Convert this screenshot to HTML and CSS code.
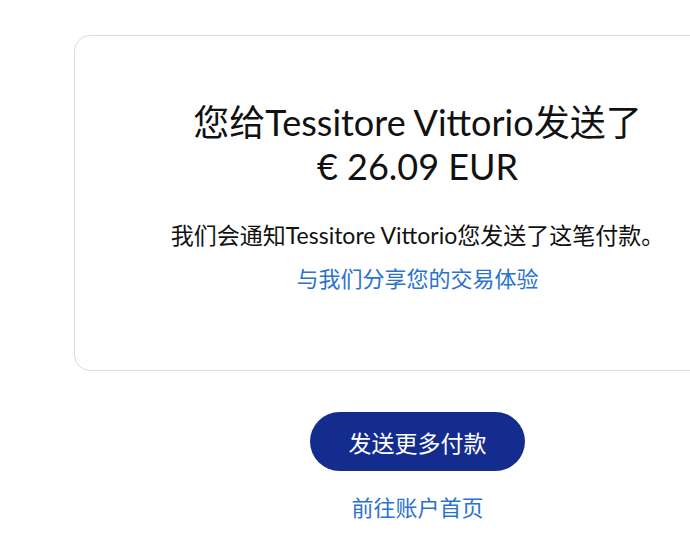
FILE: index.html
```html
<html>
    <head>
        <meta charset="utf-8">
        <link rel="stylesheet" href="styles.css">
    </head>
    <body>
        <div id="page">
            <div class="card">
                <h1 class="title">您给Tessitore Vittorio发送了<br>€ 26.09 EUR</h1>
                <p class="note">我们会通知Tessitore Vittorio您发送了这笔付款。</p>
                <a class="link share" href="#">与我们分享您的交易体验</a>
            </div>
            <div class="actions">
                <button class="more">发送更多付款</button>
                <a class="link home" href="#">前往账户首页</a>
            </div>
        </div>
    </body>
</html>
```

FILE: styles.css
```css
body, html {
    margin: 0;
    background: #fff;
    overflow: hidden;
}
#page {
    width: 687px;
    margin-left: 74px;
    padding-top: 35px;
    font-family: Lato, "Noto Sans CJK SC", sans-serif;
    color: #111;
}
.card {
    border: 1px solid #dcdcdc;
    border-radius: 16px;
    padding: 64px 20px 73px;
    display: flex;
    flex-direction: column;
    align-items: center;
    text-align: center;
}
.title {
    margin: 0;
    font-size: 36px;
    font-weight: 400;
    line-height: 44px;
}
.note {
    margin: 29px 0 0;
    font-size: 23px;
    line-height: 36px;
}
.link {
    color: #2a72d0;
    text-decoration: none;
    font-size: 22px;
    line-height: 36px;
}
.share {
    margin-top: 8px;
}
.actions {
    display: flex;
    flex-direction: column;
    align-items: center;
    padding-top: 41px;
}
.more {
    width: 215px;
    height: 59px;
    border: none;
    border-radius: 30px;
    background: #142c8e;
    color: #fff;
    font-family: Lato, "Noto Sans CJK SC", sans-serif;
    font-size: 23px;
}
.home {
    margin-top: 19px;
}
```
